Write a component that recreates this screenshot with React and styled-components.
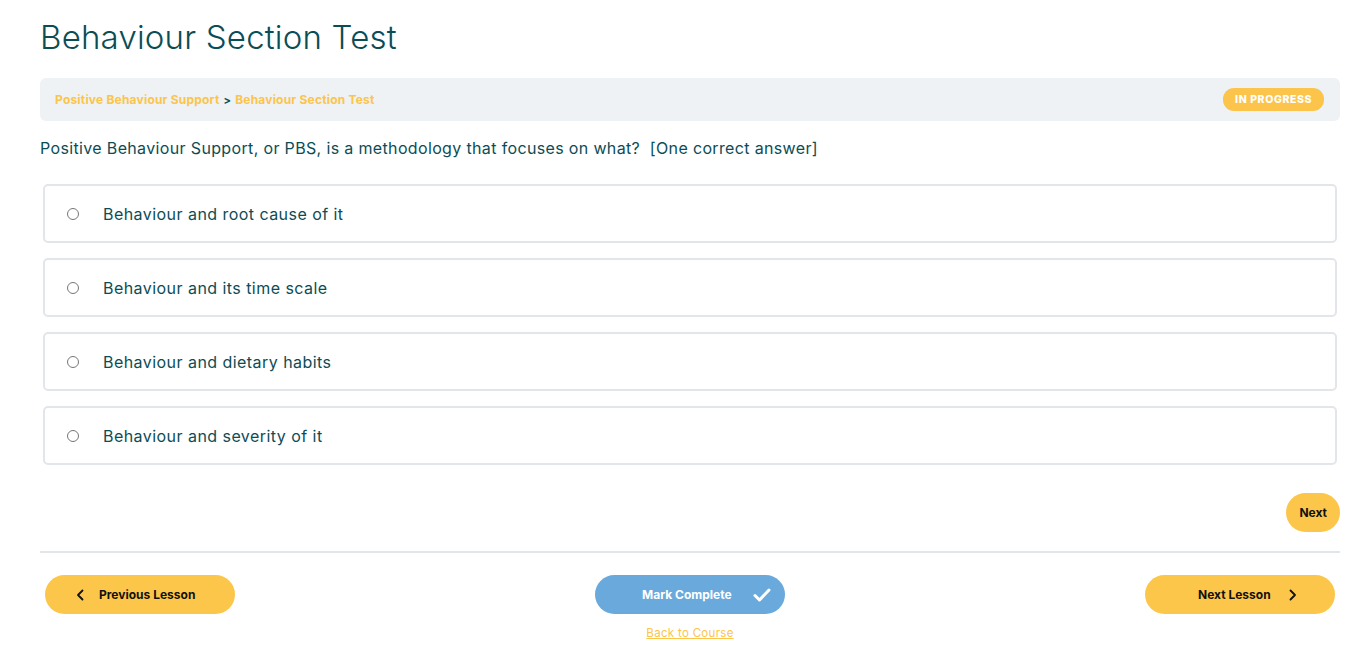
import React, { useState } from "react";
import styled, { createGlobalStyle } from "styled-components";

const GlobalStyle = createGlobalStyle`
  body {
    margin: 0;
    background: #fff;
    font-family: "Inter", "Liberation Sans", sans-serif;
  }
`;

const answers = [
  "Behaviour and root cause of it",
  "Behaviour and its time scale",
  "Behaviour and dietary habits",
  "Behaviour and severity of it",
];

const Page = styled.div`
  padding: 0 23px 0 40px;
`;

const Title = styled.h1`
  margin: 0;
  padding-top: 17px;
  font-size: 33px;
  font-weight: 300;
  color: #0b4d55;
  line-height: 40px;
  letter-spacing: 0.2px;
`;

const Crumbs = styled.div`
  margin-top: 21px;
  height: 43px;
  background: #eef2f5;
  border-radius: 6px;
  display: flex;
  align-items: center;
  justify-content: space-between;
  padding: 0 16px 0 15px;
  font-size: 12px;
  font-weight: 700;
  color: #fcc44b;
  letter-spacing: 0.2px;
`;

const Sep = styled.span`
  color: #0b4d55;
  margin: 0 4px;
  font-size: 11px;
`;

const Badge = styled.span`
  background: #fcc44b;
  color: #fff;
  font-size: 10.5px;
  font-weight: 800;
  border-radius: 11px;
  padding: 5px 12px;
  letter-spacing: 0.6px;
`;

const Question = styled.p`
  margin: 17px 0 26px;
  font-size: 16px;
  letter-spacing: 0.35px;
  color: #0b4d55;
`;

const Options = styled.div`
  display: flex;
  flex-direction: column;
  gap: 15px;
  margin: 0 3px;
`;

const Option = styled.label`
  height: 55px;
  border: 2px solid #e2e6ea;
  border-radius: 5px;
  display: flex;
  align-items: center;
  padding-left: 22px;
  gap: 24px;
  font-size: 16px;
  letter-spacing: 0.45px;
  color: #0b4d55;
  cursor: pointer;
`;

const Radio = styled.input`
  width: 12px;
  height: 12px;
  margin: 0;
  accent-color: #0b4d55;
`;

const NextRow = styled.div`
  display: flex;
  justify-content: flex-end;
  margin-top: 28px;
  padding-bottom: 19px;
  border-bottom: 2px solid #e3e6e9;
`;

const Pill = styled.button`
  border: none;
  border-radius: 20px;
  height: 39px;
  background: ${(p) => (p.$blue ? "#6aa9dc" : "#fcc64b")};
  color: ${(p) => (p.$blue ? "#fff" : "#111")};
  font-family: inherit;
  font-size: 12px;
  font-weight: 700;
  display: flex;
  align-items: center;
  justify-content: ${(p) => (p.$w ? "flex-start" : "center")};
  gap: ${(p) => p.$gap || 0}px;
  width: ${(p) => (p.$w ? `${p.$w}px` : "auto")};
  padding: 0 13px 0 ${(p) => p.$pl || 13}px;
  cursor: pointer;
`;

const Footer = styled.div`
  display: grid;
  grid-template-columns: 1fr auto 1fr;
  align-items: start;
  padding: 22px 5px 0;
`;

const Center = styled.div`
  display: flex;
  flex-direction: column;
  align-items: center;
  gap: 12px;
`;

const Back = styled.a`
  font-size: 11.5px;
  color: #fcc44b;
  text-decoration: underline;
  letter-spacing: 0.3px;
  cursor: pointer;
`;

const Right = styled.div`
  display: flex;
  justify-content: flex-end;
`;

const Chevron = ({ left }) => (
  <svg width="9" height="12" viewBox="0 0 9 12" fill="none" stroke="#111" strokeWidth="1.8" strokeLinecap="round" strokeLinejoin="round">
    {left ? <path d="M6.5 1.5 L2 6 L6.5 10.5" /> : <path d="M2.5 1.5 L7 6 L2.5 10.5" />}
  </svg>
);

const Check = () => (
  <svg width="18" height="14" viewBox="0 0 18 14" fill="none" stroke="#fff" strokeWidth="3" strokeLinecap="round" strokeLinejoin="round">
    <path d="M2 7.5 L6.5 12 L16 2" />
  </svg>
);

export default function App() {
  const [picked, setPicked] = useState(null);
  return (
    <Page>
      <GlobalStyle />
      <Title>Behaviour Section Test</Title>
      <Crumbs>
        <span>
          Positive Behaviour Support<Sep>&gt;</Sep>Behaviour Section Test
        </span>
        <Badge>IN PROGRESS</Badge>
      </Crumbs>
      <Question>
        Positive Behaviour Support, or PBS, is a methodology that focuses on what?&nbsp; [One correct answer]
      </Question>
      <Options>
        {answers.map((a, i) => (
          <Option key={a}>
            <Radio type="radio" name="q" checked={picked === i} onChange={() => setPicked(i)} />
            {a}
          </Option>
        ))}
      </Options>
      <NextRow>
        <Pill>Next</Pill>
      </NextRow>
      <Footer>
        <div>
          <Pill $w={190} $pl={31} $gap={14}>
            <Chevron left />
            Previous Lesson
          </Pill>
        </div>
        <Center>
          <Pill $blue $w={190} $pl={47} $gap={21}>
            Mark Complete
            <Check />
          </Pill>
          <Back>Back to Course</Back>
        </Center>
        <Right>
          <Pill $w={190} $pl={53} $gap={17}>
            Next Lesson
            <Chevron />
          </Pill>
        </Right>
      </Footer>
    </Page>
  );
}
